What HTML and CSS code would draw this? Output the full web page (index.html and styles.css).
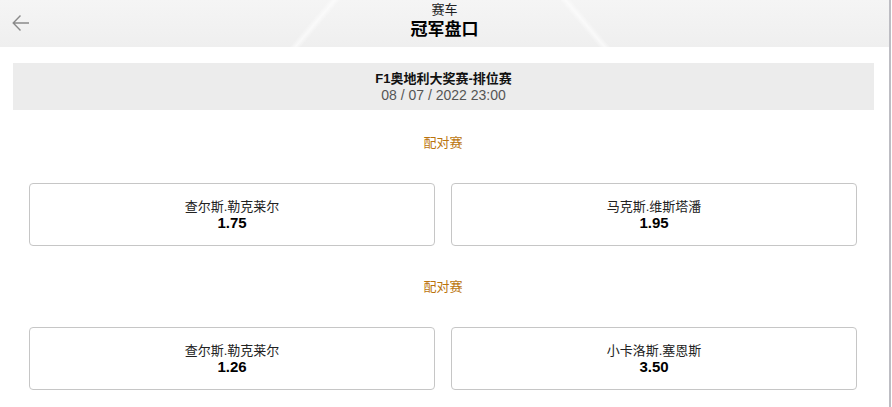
FILE: index.html
```html
<!DOCTYPE html>
<html lang="zh">
  <head>
    <title>冠军盘口</title>
    <link rel="stylesheet" href="styles.css">
  </head>
  <body>
    <div class="page">
      <div class="header">
        <a class="back" href="#">
          <svg width="18" height="18" viewBox="0 0 18 18">
            <path d="M17 9H1.5M8.5 1.5L1.2 9l7.3 7.5" fill="none" stroke="#8a8a8a" stroke-width="1.4"/>
          </svg>
        </a>
        <div class="sub">赛车</div>
        <div class="title">冠军盘口</div>
      </div>

      <div class="event">
        <div class="event-name">F1奥地利大奖赛-排位赛</div>
        <div class="event-date">08 / 07 / 2022 23:00</div>
      </div>

      <div class="section">
        <div class="section-title">配对赛</div>
        <div class="cards">
          <div class="card">
            <div class="name">查尔斯.勒克莱尔</div>
            <div class="odds">1.75</div>
          </div>
          <div class="card">
            <div class="name">马克斯.维斯塔潘</div>
            <div class="odds">1.95</div>
          </div>
        </div>
      </div>

      <div class="section">
        <div class="section-title">配对赛</div>
        <div class="cards">
          <div class="card">
            <div class="name">查尔斯.勒克莱尔</div>
            <div class="odds">1.26</div>
          </div>
          <div class="card">
            <div class="name">小卡洛斯.塞恩斯</div>
            <div class="odds">3.50</div>
          </div>
        </div>
      </div>
    </div>
  </body>
</html>
```

FILE: styles.css
```css
body {
  margin: 0;
  background: #fff;
  font-family: "Liberation Sans", Arial, "Noto Sans CJK SC", sans-serif;
  color: #111;
  overflow: hidden;
}

.page {
  width: 889px;
  height: 407px;
  border-right: 2px solid #bdbdc3;
}

/* header with faint light streaks */
.header {
  position: relative;
  height: 47px;
  text-align: center;
  background:
    linear-gradient(130deg, transparent 46%, rgba(255,255,255,0.6) 50%, transparent 54%) 260px 0 / 110px 47px no-repeat,
    linear-gradient(50deg, transparent 46%, rgba(255,255,255,0.6) 50%, transparent 54%) 530px 0 / 110px 47px no-repeat,
    linear-gradient(180deg, #f5f5f5 0%, #efefef 100%);
}

.back {
  position: absolute;
  left: 12px;
  top: 14px;
  display: block;
  width: 18px;
  height: 18px;
}

.sub {
  padding-top: 1px;
  font-size: 13px;
  line-height: 17px;
  color: #222;
}

.title {
  font-size: 17px;
  font-weight: bold;
  line-height: 23px;
  color: #000;
}

.event {
  margin: 16px 15px 0 13px;
  height: 47px;
  background: #ececec;
  text-align: center;
  box-sizing: border-box;
  padding-top: 8px;
}

.event-name {
  font-size: 13px;
  font-weight: bold;
  line-height: 16px;
}

.event-date {
  font-size: 14px;
  line-height: 17px;
  color: #555;
}

.section {
  padding: 23px 32px 8px 29px;
}

.section-title {
  text-align: center;
  font-size: 13px;
  line-height: 20px;
  color: #bb740c;
  margin-bottom: 30px;
}

.cards {
  display: grid;
  grid-template-columns: 1fr 1fr;
  gap: 16px;
}

.card {
  height: 63px;
  box-sizing: border-box;
  border: 1px solid #c6c6c6;
  border-radius: 4px;
  text-align: center;
  padding-top: 15px;
}

.name {
  font-size: 13px;
  line-height: 16px;
  color: #222;
}

.odds {
  font-size: 15px;
  font-weight: bold;
  line-height: 16px;
  color: #000;
}
```
